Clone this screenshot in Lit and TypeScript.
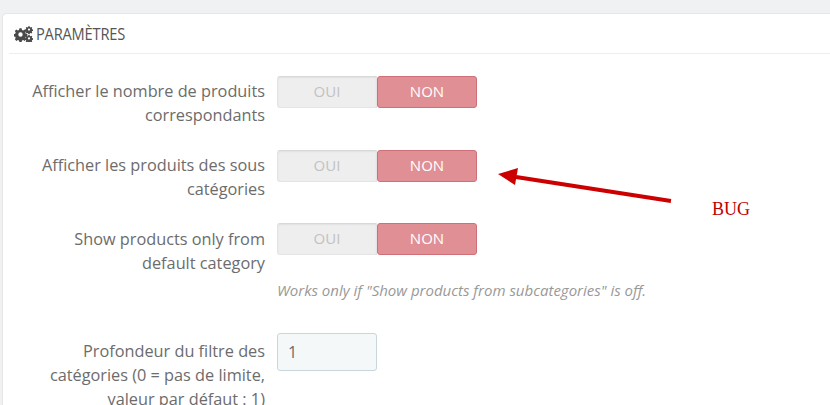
import { LitElement, html, css, svg } from 'lit';
import { customElement } from 'lit/decorators.js';

const gears = svg`
  <svg class="gears" viewBox="0 0 19 16" width="19" height="16" fill="#4a4a4a">
    <g transform="translate(6.5 8.5)">
      <path fill-rule="evenodd" d="M-1.1-6.2h2.2l.4 1.6 1.2.5 1.4-.9 1.6 1.6-.9 1.4.5 1.2 1.6.4v2.2l-1.6.4-.5 1.2.9 1.4-1.6 1.6-1.4-.9-1.2.5-.4 1.6h-2.2l-.4-1.6-1.2-.5-1.4.9-1.6-1.6.9-1.4-.5-1.2-1.6-.4v-2.2l1.6-.4.5-1.2-.9-1.4 1.6-1.6 1.4.9 1.2-.5zM0-2.2a2.2 2.2 0 1 0 0 4.4a2.2 2.2 0 1 0 0-4.4z"/>
    </g>
    <g transform="translate(15 3.6)">
      <path fill-rule="evenodd" d="M-.7-3.4h1.4l.2.9.7.3.8-.5.9.9-.5.8.3.7.9.2v1.4l-.9.2-.3.7.5.8-.9.9-.8-.5-.7.3-.2.9h-1.4l-.2-.9-.7-.3-.8.5-.9-.9.5-.8-.3-.7-.9-.2v-1.4l.9-.2.3-.7-.5-.8.9-.9.8.5.7-.3zM0-1.1a1.1 1.1 0 1 0 0 2.2a1.1 1.1 0 1 0 0-2.2z"/>
    </g>
    <g transform="translate(15 12.4)">
      <path fill-rule="evenodd" d="M-.7-3.4h1.4l.2.9.7.3.8-.5.9.9-.5.8.3.7.9.2v1.4l-.9.2-.3.7.5.8-.9.9-.8-.5-.7.3-.2.9h-1.4l-.2-.9-.7-.3-.8.5-.9-.9.5-.8-.3-.7-.9-.2v-1.4l.9-.2.3-.7-.5-.8.9-.9.8.5.7-.3zM0-1.1a1.1 1.1 0 1 0 0 2.2a1.1 1.1 0 1 0 0-2.2z"/>
    </g>
  </svg>`;

@customElement('app-root')
export class AppRoot extends LitElement {
  static styles = css`
    :host {
      display: block;
      height: 405px;
      overflow: hidden;
      position: relative;
      background: #eff1f2;
      padding-top: 13px;
      box-sizing: border-box;
      font-family: 'Open Sans', sans-serif;
      font-size: 16.3px;
      color: #6c6c6c;
    }

    .panel {
      margin-left: 2px;
      background: #fff;
      border: 1px solid #e6e6e6;
      border-right: none;
      border-bottom: none;
      border-radius: 5px 0 0 0;
      padding: 0 0 0 6px;
      height: 392px;
      box-sizing: border-box;
    }

    .head {
      display: flex;
      align-items: center;
      gap: 3px;
      height: 39px;
      border-bottom: 1px solid #eee;
      padding-left: 5px;
      color: #555;
    }

    .title {
      font-size: 17px;
      letter-spacing: -0.2px;
      transform: scaleX(0.86);
      transform-origin: left center;
    }

    .row {
      display: grid;
      grid-template-columns: 256px 200px;
      column-gap: 12px;
      line-height: 24px;
    }

    .label {
      text-align: right;
      padding-top: 3px;
      padding-left: 16px;
    }

    .first { margin-top: 22px; }
    .second { margin-top: 23px; }
    .third { margin-top: 22px; }
    .fourth { margin-top: 34px; }
    .third .label { padding-top: 4px; }
    .fourth .label { padding-top: 6px; }

    .switch {
      display: flex;
      height: 32px;
      width: 200px;
      font-size: 15px;
      line-height: 29px;
      text-align: center;
      box-sizing: border-box;
    }

    .off {
      width: 100px;
      background: #eee;
      color: #c2c2c2;
      border-radius: 3px 0 0 3px;
      border: 1px solid #e4e4e4;
      border-top-color: #d8d8d8;
      box-shadow: inset 0 1px 2px rgba(0, 0, 0, 0.06);
      box-sizing: border-box;
    }

    .on {
      width: 100px;
      background: #e08f95;
      color: #fff;
      font-weight: 500;
      border: 1px solid #cf7078;
      border-radius: 3px;
      box-sizing: border-box;
    }

    .help {
      width: 420px;
      margin-top: 26px;
      font-size: 15px;
      font-style: italic;
      color: #999;
      line-height: 18px;
      white-space: nowrap;
    }

    .input {
      width: 100px;
      height: 38px;
      box-sizing: border-box;
      background: #f5f8f9;
      border: 1px solid #c7d6db;
      border-radius: 3px;
      padding: 0 10px;
      line-height: 36px;
      font-size: 16px;
      color: #6c6c6c;
    }

    .arrow {
      position: absolute;
      left: 490px;
      top: 160px;
    }

    .bug {
      position: absolute;
      left: 712px;
      top: 199px;
      font-family: 'Liberation Serif', serif;
      font-size: 18px;
      line-height: 20px;
      color: #c00000;
    }
  `;

  private _switch() {
    return html`
      <div class="switch">
        <div class="off">OUI</div>
        <div class="on">NON</div>
      </div>
    `;
  }

  render() {
    return html`
      <div class="panel">
        <div class="head">${gears}<span class="title">PARAMÈTRES</span></div>

        <div class="row first">
          <div class="label">Afficher le nombre de produits correspondants</div>
          ${this._switch()}
        </div>
        <div class="row second">
          <div class="label">Afficher les produits des sous catégories</div>
          ${this._switch()}
        </div>
        <div class="row third">
          <div class="label">Show products only from default category</div>
          <div>
            ${this._switch()}
            <div class="help">Works only if "Show products from subcategories" is off.</div>
          </div>
        </div>
        <div class="row fourth">
          <div class="label">Profondeur du filtre des catégories (0 = pas de limite, valeur par défaut : 1)</div>
          <div class="input">1</div>
        </div>
      </div>

      <svg class="arrow" width="190" height="50" viewBox="490 160 190 50">
        <line x1="671" y1="201" x2="516" y2="177" stroke="#cc0000" stroke-width="4" />
        <polygon points="498,174 518,168 515,185" fill="#cc0000" />
      </svg>
      <div class="bug">BUG</div>
    `;
  }
}
